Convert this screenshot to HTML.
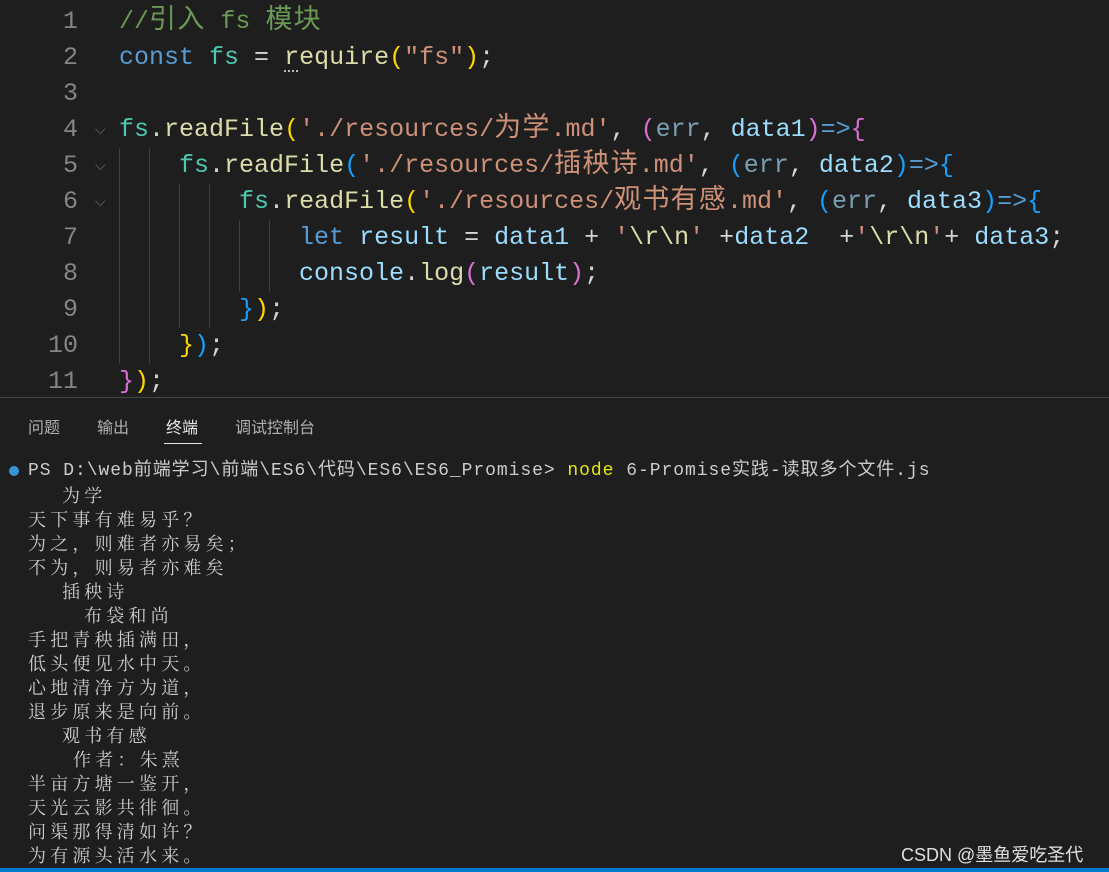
<!DOCTYPE html><html><head><meta charset="utf-8"><style>
body{margin:0;width:1109px;height:872px;background:#1e1e1e;overflow:hidden;position:relative;font-family:"Liberation Mono","Noto Sans CJK SC",monospace}
.l{position:absolute;left:0;height:36px;line-height:36px;font-size:25px;white-space:pre;color:#d4d4d4}
.n{position:absolute;width:78px;text-align:right;color:#858585}
.t{position:absolute;left:119px}
.c{letter-spacing:1.2px;font-size:27px}
.cm{color:#6a9955}.kw{color:#569cd6}.fs{color:#4ec9b0}.fn{color:#dcdcaa}.st{color:#ce9178}.p{color:#9cdcfe}.g{color:#ffd700}.pu{color:#da70d6}.bl{color:#179fff}.dim{color:#7a9fb3}
.gd{position:absolute;width:1px;background:#404040}
.ch{position:absolute;left:95px;color:#6e6e6e;font-size:14px;font-family:"DejaVu Sans",sans-serif}
.tab{position:absolute;top:414px;font-size:16px;color:#b0b0b0;font-family:"Liberation Sans","Noto Sans CJK SC",sans-serif}
.tl{position:absolute;left:28px;font-size:18px;line-height:24px;height:24px;white-space:pre;color:#cccccc;font-family:"Noto Serif CJK SC",serif;letter-spacing:4.2px}
</style></head><body>
<div class="gd" style="left:119px;top:148px;height:216px"></div>
<div class="gd" style="left:149px;top:148px;height:216px"></div>
<div class="gd" style="left:179px;top:184px;height:144px"></div>
<div class="gd" style="left:209px;top:184px;height:144px"></div>
<div class="gd" style="left:239px;top:220px;height:72px"></div>
<div class="gd" style="left:269px;top:220px;height:72px"></div>

<div class="l" style="top:4px"><span class="n">1</span><span class="t"><span class="cm">//<span class="c">引入</span> fs <span class="c">模块</span></span></span></div>
<div class="l" style="top:40px"><span class="n">2</span><span class="t"><span class="kw">const</span> <span class="fs">fs</span> = <span class="fn">require</span><span class="g">(</span><span class="st">"fs"</span><span class="g">)</span>;</span></div>
<div style="position:absolute;left:284px;top:70px;width:14px;height:2px;border-top:2px dotted #bbb"></div>
<div class="l" style="top:76px"><span class="n">3</span></div>
<div class="l" style="top:112px"><span class="n">4</span><span class="ch" style="top:0">⌵</span><span class="t"><span class="fs">fs</span>.<span class="fn">readFile</span><span class="g">(</span><span class="st">'./resources/<span class="c">为学</span>.md'</span>, <span class="pu">(</span><span class="dim">err</span>, <span class="p">data1</span><span class="pu">)</span><span class="kw">=&gt;</span><span class="pu">{</span></span></div>
<div class="l" style="top:148px"><span class="n">5</span><span class="ch">⌵</span><span class="t">    <span class="fs">fs</span>.<span class="fn">readFile</span><span class="bl">(</span><span class="st">'./resources/<span class="c">插秧诗</span>.md'</span>, <span class="bl">(</span><span class="dim">err</span>, <span class="p">data2</span><span class="bl">)</span><span class="kw">=&gt;</span><span class="bl">{</span></span></div>
<div class="l" style="top:184px"><span class="n">6</span><span class="ch">⌵</span><span class="t">        <span class="fs">fs</span>.<span class="fn">readFile</span><span class="g">(</span><span class="st">'./resources/<span class="c">观书有感</span>.md'</span>, <span class="bl">(</span><span class="dim">err</span>, <span class="p">data3</span><span class="bl">)</span><span class="kw">=&gt;</span><span class="bl">{</span></span></div>
<div class="l" style="top:220px"><span class="n">7</span><span class="t">            <span class="kw">let</span> <span class="p">result</span> = <span class="p">data1</span> + <span class="st">'</span><span class="fn">\r\n</span><span class="st">'</span> +<span class="p">data2</span>  +<span class="st">'</span><span class="fn">\r\n</span><span class="st">'</span>+ <span class="p">data3</span>;</span></div>
<div class="l" style="top:256px"><span class="n">8</span><span class="t">            <span class="p">console</span>.<span class="fn">log</span><span class="pu">(</span><span class="p">result</span><span class="pu">)</span>;</span></div>
<div class="l" style="top:292px"><span class="n">9</span><span class="t">        <span class="bl">}</span><span class="g">)</span>;</span></div>
<div class="l" style="top:328px"><span class="n">10</span><span class="t">    <span class="g">}</span><span class="bl">)</span>;</span></div>
<div class="l" style="top:364px"><span class="n">11</span><span class="t"><span class="pu">}</span><span class="g">)</span>;</span></div>

<div style="position:absolute;left:0;top:397px;width:1109px;height:1px;background:#474747"></div>
<div class="tab" style="left:28px">问题</div>
<div class="tab" style="left:97px">输出</div>
<div class="tab" style="left:166px;color:#e7e7e7">终端</div>
<div style="position:absolute;left:164px;top:443px;width:38px;height:1px;background:#e7e7e7"></div>
<div class="tab" style="left:235px">调试控制台</div>

<div style="position:absolute;left:9px;top:466px;width:10px;height:10px;border-radius:50%;background:#3794d6"></div>
<div style="position:absolute;left:28px;top:459px;font-size:18px;line-height:24px;white-space:pre;color:#cccccc;font-family:'Liberation Mono','Noto Sans CJK SC',monospace;letter-spacing:0.95px">PS D:\web前端学习\前端\ES6\代码\ES6\ES6_Promise&gt; <span style="color:#e5e510">node</span> 6-Promise实践-读取多个文件.js</div>

<div class="tl" style="top:483px;left:62px">为学</div>
<div class="tl" style="top:507px">天下事有难易乎？</div>
<div class="tl" style="top:531px">为之，则难者亦易矣；</div>
<div class="tl" style="top:555px">不为，则易者亦难矣</div>
<div class="tl" style="top:579px;left:62px">插秧诗</div>
<div class="tl" style="top:603px;left:84px">布袋和尚</div>
<div class="tl" style="top:627px">手把青秧插满田，</div>
<div class="tl" style="top:651px">低头便见水中天。</div>
<div class="tl" style="top:675px">心地清净方为道，</div>
<div class="tl" style="top:699px">退步原来是向前。</div>
<div class="tl" style="top:723px;left:62px">观书有感</div>
<div class="tl" style="top:747px;left:73px">作者：朱熹</div>
<div class="tl" style="top:771px">半亩方塘一鉴开，</div>
<div class="tl" style="top:795px">天光云影共徘徊。</div>
<div class="tl" style="top:819px">问渠那得清如许？</div>
<div class="tl" style="top:843px">为有源头活水来。</div>

<div style="position:absolute;left:901px;top:841px;font-size:18px;color:#e0e0e0;font-family:'Liberation Sans','Noto Sans CJK SC',sans-serif">CSDN @墨鱼爱吃圣代</div>
<div style="position:absolute;left:0;top:868px;width:1109px;height:4px;background:#007acc"></div>
</body></html>
